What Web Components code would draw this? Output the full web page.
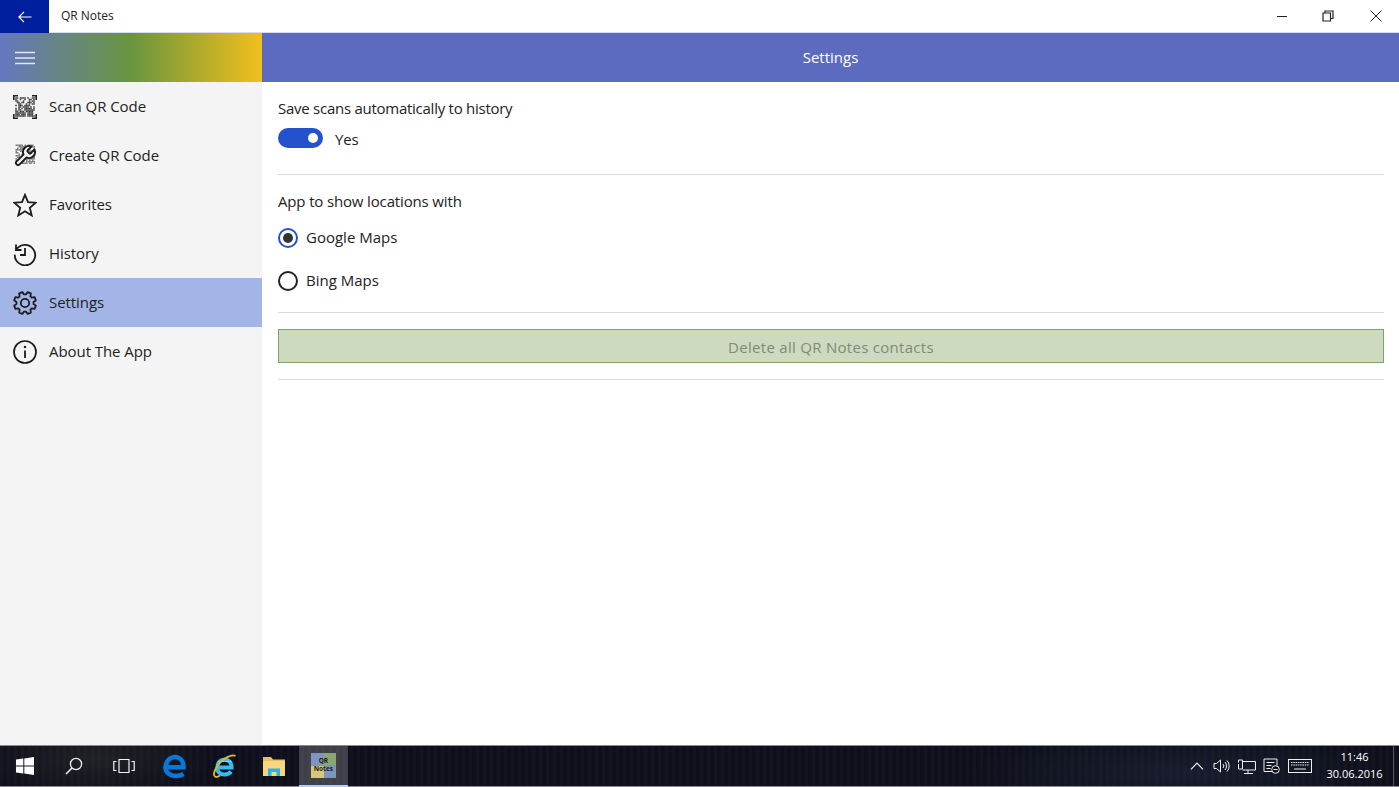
<!DOCTYPE html>
<html>
<head>
<meta charset="utf-8">
<title>QR Notes</title>
<style>
  html, body { margin: 0; height: 100%; overflow: hidden; background: #fff; }
  body { font-family: "Open Sans", "Liberation Sans", sans-serif; font-size: 15px; color: #222; }
  qr-app { height: 787px; }
</style>
</head>
<body>
<qr-app>
  <qr-titlebar slot="titlebar">QR Notes</qr-titlebar>
  <qr-nav slot="nav">
    <qr-nav-item icon="scan">Scan QR Code</qr-nav-item>
    <qr-nav-item icon="create">Create QR Code</qr-nav-item>
    <qr-nav-item icon="star">Favorites</qr-nav-item>
    <qr-nav-item icon="history">History</qr-nav-item>
    <qr-nav-item icon="gear" selected>Settings</qr-nav-item>
    <qr-nav-item icon="info">About The App</qr-nav-item>
  </qr-nav>
  <qr-header slot="header">Settings</qr-header>
  <qr-settings slot="content"></qr-settings>
  <qr-taskbar slot="taskbar"></qr-taskbar>
</qr-app>

<script>
// pseudo random modules, so the two qr icons look like real codes
function qrModules(x0, y0, size, cell, seed, fill, density) {
  let out = '';
  let s = seed;
  for (let y = 0; y < size; y++) {
    for (let x = 0; x < size; x++) {
      s = (s * 1103515245 + 12345) & 0x7fffffff;
      if ((s >> 16) % 100 < density) {
        out += `<rect x="${x0 + x * cell}" y="${y0 + y * cell}" width="${cell}" height="${cell}" fill="${fill}"/>`;
      }
    }
  }
  return out;
}

function gearPath(teeth, rOut, rIn) {
  const pts = [];
  const step = Math.PI * 2 / teeth;
  for (let i = 0; i < teeth; i++) {
    const a = i * step + step / 2;
    pts.push([a - step * 0.36, rIn], [a - step * 0.2, rOut], [a + step * 0.2, rOut], [a + step * 0.36, rIn]);
  }
  return 'M' + pts.map(([a, r]) => `${(12 + r * Math.cos(a)).toFixed(2)} ${(12 + r * Math.sin(a)).toFixed(2)}`).join('L') + 'Z';
}

const NAV_ICONS = {
  scan: `${qrModules(2.25, 2.25, 13, 1.5, 7, '#3f3f3f', 68)}
    <path d="M.8 5V.8H5M19 .8h4.200V5M23.200 19v4.200H19M5 23.200H.8V19" fill="none" stroke="#222" stroke-width="1.600"/>`,
  create: `${qrModules(2.5, 0.5, 13, 1.5, 21, '#7c7c7c', 68)}
    <path d="M14.7 6.3a1 1 0 0 0 0 1.4l1.6 1.6a1 1 0 0 0 1.4 0l3.77-3.77a6 6 0 0 1-7.94 7.94l-6.91 6.91a2.12 2.12 0 0 1-3-3l6.91-6.91a6 6 0 0 1 7.94-7.94l-3.76 3.76z" fill="#f4f4f4" stroke="#1c1c1c" stroke-width="1.9" stroke-linejoin="round"/>`,
  star: `<path d="M12 1.8l3 7.3 7.8.6-6 5.1 1.9 7.6L12 18.3l-6.7 4.1 1.9-7.6-6-5.1 7.8-.6z" fill="none" stroke="#1c1c1c" stroke-width="1.8" stroke-linejoin="miter"/>`,
  history: `<path d="M3 2.500V8h5.500M3.400 7.600A10.200 10.200 0 1 1 1.800 12.600" fill="none" stroke="#1c1c1c" stroke-width="1.8"/>
    <path d="M12 6v7H7" fill="none" stroke="#1c1c1c" stroke-width="1.8"/>`,
  gear: `<path d="${gearPath(8, 11.2, 8.6)}" fill="none" stroke="#1c1c1c" stroke-width="1.8" stroke-linejoin="round"/>
    <circle cx="12" cy="12" r="4.2" fill="none" stroke="#1c1c1c" stroke-width="1.8"/>`,
  info: `<circle cx="12" cy="12" r="11" fill="none" stroke="#1c1c1c" stroke-width="1.7"/>
    <path d="M12 10.500V18" stroke="#1c1c1c" stroke-width="1.8"/><circle cx="12" cy="7" r="1.2" fill="#1c1c1c"/>`
};

class QrApp extends HTMLElement {
  constructor() {
    super();
    this.attachShadow({ mode: 'open' }).innerHTML = `
      <style>
        :host { display: grid; grid-template-columns: 262px 1fr; grid-template-rows: 33px 1fr 42px; }
        ::slotted([slot=titlebar]), ::slotted([slot=taskbar]) { grid-column: 1 / 3; }
        .main { display: flex; flex-direction: column; min-width: 0; }
      </style>
      <slot name="titlebar"></slot>
      <slot name="nav"></slot>
      <div class="main"><slot name="header"></slot><slot name="content"></slot></div>
      <slot name="taskbar"></slot>
    `;
  }
}

class QrTitlebar extends HTMLElement {
  constructor() {
    super();
    this.attachShadow({ mode: 'open' }).innerHTML = `
      <style>
        :host { display: flex; align-items: stretch; height: 33px; box-sizing: border-box; background: #fff; border-bottom: 1px solid #d9dcf0; font-size: 12px; color: #222; }
        .back { width: 49px; background: #001f9f; display: flex; align-items: center; justify-content: center; margin-bottom: -1px; }
        .title { flex: 1; padding-left: 12px; line-height: 32px; letter-spacing: -.03px; }
        .ctl { width: 47px; display: flex; align-items: center; justify-content: center; }
        .restore svg { margin-right: 1px; }
      </style>
      <div class="back">
        <svg width="14" height="12" viewBox="0 0 14 12"><path d="M13.500 6H1M6 .8L.9 6 6 11.200" fill="none" stroke="#fff" stroke-width="1.200"/></svg>
      </div>
      <div class="title"><slot></slot></div>
      <div class="ctl"><svg width="12" height="12" viewBox="0 0 12 12"><path d="M1 6.500h10" stroke="#222" stroke-width="1"/></svg></div>
      <div class="ctl restore"><svg width="12" height="12" viewBox="0 0 12 12"><path d="M3 3V1h8v7.500H9M1 3h7.500v8H1z" fill="none" stroke="#222" stroke-width="1.200"/></svg></div>
      <div class="ctl"><svg width="12" height="12" viewBox="0 0 12 12"><path d="M.5 .5l11 11M11.500 .5l-11 11" stroke="#222" stroke-width="1"/></svg></div>
    `;
  }
}

class QrNav extends HTMLElement {
  constructor() {
    super();
    this.attachShadow({ mode: 'open' }).innerHTML = `
      <style>
        :host { display: flex; flex-direction: column; background: #f4f4f4; }
        .head { height: 49px; flex: none; display: flex; align-items: center; padding-left: 15px;
          background: linear-gradient(90deg, #6577c0 0%, #69953f 50%, #f2c01c 100%); }
      </style>
      <div class="head">
        <svg width="20" height="14" viewBox="0 0 20 14"><path d="M0 1.500h20M0 7h20M0 12.500h20" stroke="#e4e8f0" stroke-width="1.300"/></svg>
      </div>
      <slot></slot>
    `;
  }
}

class QrNavItem extends HTMLElement {
  connectedCallback() {
    if (this.shadowRoot) return;
    this.attachShadow({ mode: 'open' }).innerHTML = `
      <style>
        :host { display: flex; align-items: center; height: 49px; padding-left: 13px; color: #222; font-size: 15px; letter-spacing: -.06px; }
        :host([selected]) { background: #a3b5e6; }
        svg { width: 24px; height: 24px; margin-right: 12px; flex: none; }
        span { padding-bottom: 1px; }
      </style>
      <svg viewBox="0 0 24 24">${NAV_ICONS[this.getAttribute('icon')]}</svg>
      <span><slot></slot></span>
    `;
  }
}

class QrHeader extends HTMLElement {
  constructor() {
    super();
    this.attachShadow({ mode: 'open' }).innerHTML = `
      <style>
        :host { display: flex; align-items: center; justify-content: center; height: 49px; flex: none; background: #5c6bc0; color: #fff; font-size: 15px; padding-bottom: 2px; box-sizing: border-box; }
      </style>
      <slot></slot>
    `;
  }
}

class QrToggle extends HTMLElement {
  constructor() {
    super();
    this.attachShadow({ mode: 'open' }).innerHTML = `
      <style>
        :host { display: flex; align-items: center; height: 20px; gap: 12px; letter-spacing: -.2px; }
        .track { width: 45px; height: 20px; border-radius: 10px; background: #2452cc; position: relative; }
        .knob { position: absolute; right: 5px; top: 5px; width: 10px; height: 10px; border-radius: 50%; background: #fff; }
        span { padding-top: 1px; }
      </style>
      <div class="track"><div class="knob"></div></div>
      <span><slot></slot></span>
    `;
  }
}

class QrRadio extends HTMLElement {
  connectedCallback() {
    if (this.shadowRoot) return;
    const on = this.hasAttribute('checked');
    this.attachShadow({ mode: 'open' }).innerHTML = `
      <style>
        :host { display: flex; align-items: center; height: 43px; gap: 8px; }
        .ring { width: 20px; height: 20px; box-sizing: border-box; border-radius: 50%; border: 2px solid ${on ? '#2452cc' : '#222'}; display: flex; align-items: center; justify-content: center; }
        .dot { width: 10px; height: 10px; border-radius: 50%; background: #333; }
        span { padding-bottom: 2px; }
      </style>
      <div class="ring">${on ? '<div class="dot"></div>' : ''}</div>
      <span><slot></slot></span>
    `;
  }
}

class QrSettings extends HTMLElement {
  constructor() {
    super();
    this.attachShadow({ mode: 'open' }).innerHTML = `
      <style>
        :host { display: block; flex: 1; background: #fff; padding: 0 15px 0 16px; color: #222; font-size: 15px; }
        section { border-bottom: 1px solid #d9d9d9; padding-top: 16px; }
        .label { line-height: 20px; }
        .first { padding-bottom: 26px; }
        .first .label { letter-spacing: -.26px; margin-bottom: 10px; }
        .second { padding-bottom: 10px; }
        .second .label { letter-spacing: -.15px; margin-bottom: 5px; }
        .third { padding-bottom: 16px; }
        .delete { height: 34px; box-sizing: border-box; background: #cedabf; border: 1px solid #7fa36a; color: #7f8a7a; display: flex; align-items: center; justify-content: center; letter-spacing: .29px; padding-top: 1px; }
      </style>
      <section class="first">
        <div class="label">Save scans automatically to history</div>
        <qr-toggle>Yes</qr-toggle>
      </section>
      <section class="second">
        <div class="label">App to show locations with</div>
        <qr-radio checked>Google Maps</qr-radio>
        <qr-radio>Bing Maps</qr-radio>
      </section>
      <section class="third">
        <div class="delete">Delete all QR Notes contacts</div>
      </section>
    `;
  }
}

class QrTaskbar extends HTMLElement {
  constructor() {
    super();
    this.attachShadow({ mode: 'open' }).innerHTML = `
      <style>
        :host { display: flex; height: 42px; box-sizing: border-box; color: #fff; font-size: 11px;
          border-top: 1px solid #8a8a90; border-bottom: 1px solid #8a8a90;
          background:
            radial-gradient(ellipse 120px 40px at 95px 12px, rgba(70,75,60,.3), transparent),
            radial-gradient(ellipse 220px 40px at 1180px 26px, rgba(40,55,80,.35), transparent),
            repeating-linear-gradient(90deg, rgba(255,255,255,.018) 0 3px, transparent 3px 7px),
            #0e0f1b; }
        .btn { width: 49.6px; flex: none; display: flex; align-items: center; justify-content: center; box-sizing: border-box; }
        .active { background: rgba(255,255,255,.2); border-bottom: 2px solid #b4cdf2; margin-bottom: -1px; }
        .tray { margin-left: auto; display: flex; align-items: stretch; }
        .t { display: flex; align-items: center; justify-content: center; width: 25px; }
        .kbd { width: 31px; }
        .clock { width: 78px; display: flex; flex-direction: column; align-items: center; justify-content: center; line-height: 17px; padding: 0 0 2px 1px; box-sizing: border-box; }
        .end { width: 5px; border-left: 1px solid #556; }
        .qr { width: 25px; height: 25px; box-sizing: border-box; font-size: 6.500px; line-height: 8px; font-weight: 700; color: #1a1a1a; text-align: center; padding-top: 4px;
          background:
            linear-gradient(rgba(190,190,190,.35), rgba(190,190,190,.35)),
            conic-gradient(#6e9a4a 0 25%, #5c7fb8 25% 50%, #e4cb55 50% 75%, #5f7fc2 75% 100%); }
      </style>
      <div class="btn">
        <svg width="18" height="18" viewBox="0 0 18 18"><path d="M0 2.600L7.300 1.500v7H0zM8.300 1.400L18 0v8.500H8.300zM0 9.500h7.300v7L0 15.400zM8.300 9.500H18V18l-9.700-1.400z" fill="#fff"/></svg>
      </div>
      <div class="btn">
        <svg width="18" height="18" viewBox="0 0 18 18"><circle cx="11" cy="7" r="5.600" fill="none" stroke="#f2f2f2" stroke-width="1.300"/><path d="M7 11l-6 6" stroke="#f2f2f2" stroke-width="1.600"/></svg>
      </div>
      <div class="btn">
        <svg width="22" height="16" viewBox="0 0 22 16"><path d="M6 1.500h10v13H6zM3.500 3.500H.8v9h2.700M18.500 3.500h2.700v9h-2.700" fill="none" stroke="#f2f2f2" stroke-width="1.200"/></svg>
      </div>
      <div class="btn" style="margin-left:1px">
        <svg width="24" height="24" viewBox="0 0 24 24"><path d="M5 13.300H20.500C20.500 7 17 3 12 3 7 3 3 7.500 2.500 13 2.400 18.500 7 22 13 22c3 0 5.400-.7 7.500-2" fill="none" stroke="#0a78d7" stroke-width="4.600"/></svg>
      </div>
      <div class="btn">
        <svg width="26" height="26" viewBox="0 0 26 26"><path d="M7 14.500H20.500C20.500 9 17.500 6.500 13.500 6.500S6.500 9.500 6.300 14.500c-.2 4.800 3.200 7 7.200 7 2.700 0 5-1 6.500-3" fill="none" stroke="#35bdf0" stroke-width="4"/><path d="M7 8.500h13" stroke="#bfefff" stroke-width="1" opacity=".6"/><path d="M24.500 3C21 1 12 5 7 12 3.500 17 2 22 4 23.500c1 .7 3 .3 5-1" fill="none" stroke="#e9b52a" stroke-width="1.700"/></svg>
      </div>
      <div class="btn">
        <svg width="22" height="20" viewBox="0 0 22 20"><path d="M0 1h8l2 2.500h12V20H0z" fill="#e9bf5c"/><path d="M0 5h22v15H0z" fill="#f6d77f"/><path d="M5 20v-7.500h12V20h-3.500v-4h-5v4z" fill="#25b4ee"/></svg>
      </div>
      <div class="btn active"><div class="qr">QR<br>Notes</div></div>
      <div class="tray">
        <div class="t"><svg width="14" height="8" viewBox="0 0 14 8"><path d="M1 7.300L7 1l6 6.300" fill="none" stroke="#eee" stroke-width="1.200"/></svg></div>
        <div class="t"><svg width="17" height="14" viewBox="0 0 17 14"><path d="M1 4.500h2.500L7.500 1v12L3.500 9.500H1zM10 5a3 3 0 0 1 0 4M12 3a6 6 0 0 1 0 8M14 1.500a8 8 0 0 1 0 11" fill="none" stroke="#eee" stroke-width="1"/></svg></div>
        <div class="t"><svg width="18" height="15" viewBox="0 0 18 15"><path d="M.5 3.500V1h4v9H.5V5M4.500 2.500h13V11H4.500M10 11v3M6 14.500h9" fill="none" stroke="#eee" stroke-width="1"/></svg></div>
        <div class="t"><svg width="17" height="16" viewBox="0 0 17 16"><path d="M9 13.500H1V1h13v6.500M3.500 4.500h8M3.500 7.500h5M3.500 10.500h4" fill="none" stroke="#eee" stroke-width="1"/><circle cx="12.500" cy="11.500" r="3.800" fill="#0e0f1b" stroke="#eee" stroke-width="1"/><path d="M10.500 11.500h4" stroke="#eee"/></svg></div>
        <div class="t kbd"><svg width="24" height="14" viewBox="0 0 24 14"><rect x=".5" y=".5" width="23" height="13" fill="none" stroke="#eee"/><path d="M3 3.500h18M3 6h18" stroke="#eee" stroke-dasharray="1.500 .8"/><path d="M6 10h12" stroke="#eee"/></svg></div>
        <div class="clock"><span>11:46</span><span>30.06.2016</span></div>
        <div class="end"></div>
      </div>
    `;
  }
}

customElements.define('qr-app', QrApp);
customElements.define('qr-titlebar', QrTitlebar);
customElements.define('qr-nav', QrNav);
customElements.define('qr-nav-item', QrNavItem);
customElements.define('qr-header', QrHeader);
customElements.define('qr-toggle', QrToggle);
customElements.define('qr-radio', QrRadio);
customElements.define('qr-settings', QrSettings);
customElements.define('qr-taskbar', QrTaskbar);
</script>
</body>
</html>
